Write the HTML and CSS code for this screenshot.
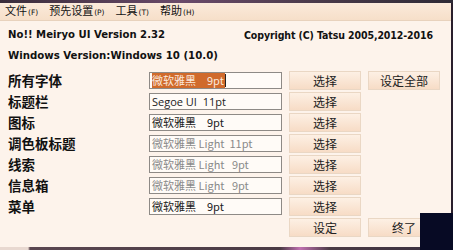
FILE: index.html
```html
<!DOCTYPE html>
<html>
<head>
<meta charset="utf-8">
<link rel="stylesheet" href="styles.css">
</head>
<body>
<div class="topstrip"></div>
<div class="window">
  <div class="menubar">
    <span class="menu">文件<small>(F)</small></span>
    <span class="menu">预先设置<small>(P)</small></span>
    <span class="menu">工具<small>(T)</small></span>
    <span class="menu">帮助<small>(H)</small></span>
  </div>
  <div class="content">
    <div class="head1">
      <span class="ver">No!! Meiryo UI Version 2.32</span>
      <span class="copy">Copyright (C) Tatsu 2005,2012-2016</span>
    </div>
    <div class="head2">Windows Version:Windows 10 (10.0)</div>
    <div class="rows">
      <div class="row">
        <span class="label">所有字体</span>
        <span class="box"><span class="sel">微软雅黑　9pt</span><span class="caret"></span></span>
        <span class="btn">选择</span>
        <span class="btn">设定全部</span>
      </div>
      <div class="row">
        <span class="label">标题栏</span>
        <span class="box seg">Segoe UI&nbsp; 11pt</span>
        <span class="btn">选择</span>
      </div>
      <div class="row">
        <span class="label">图标</span>
        <span class="box">微软雅黑　9pt</span>
        <span class="btn">选择</span>
      </div>
      <div class="row">
        <span class="label">调色板标题</span>
        <span class="box grey">微软雅黑 Light&nbsp; 11pt</span>
        <span class="btn">选择</span>
      </div>
      <div class="row">
        <span class="label">线索</span>
        <span class="box grey">微软雅黑 Light&nbsp;&nbsp; 9pt</span>
        <span class="btn">选择</span>
      </div>
      <div class="row">
        <span class="label">信息箱</span>
        <span class="box grey">微软雅黑 Light&nbsp;&nbsp; 9pt</span>
        <span class="btn">选择</span>
      </div>
      <div class="row">
        <span class="label">菜单</span>
        <span class="box">微软雅黑　9pt</span>
        <span class="btn">选择</span>
      </div>
      <div class="row">
        <span class="label"></span>
        <span class="spacer"></span>
        <span class="btn">设定</span>
        <span class="btn">终了</span>
      </div>
    </div>
  </div>
</div>
<div class="bottomstrip"></div>
<div class="overlay"></div>
</body>
</html>
```
FILE: styles.css
```css
html, body {
  margin: 0;
  padding: 0;
}
body {
  width: 453px;
  height: 250px;
  overflow: hidden;
  background: #2a1f2c;
  position: relative;
  font-family: "Noto Sans CJK SC", sans-serif;
}
.topstrip {
  height: 3px;
  background: linear-gradient(90deg, #3a2c3a, #6a4a6a 40%, #4a3a4a 70%, #2e2a36);
}
.window {
  width: 451px;
  height: 244px;
  background: #fdf3eb;
  display: flex;
  flex-direction: column;
}
.menubar {
  height: 17px;
  display: flex;
  align-items: center;
  padding-left: 5px;
  gap: 11px;
  background: linear-gradient(#fbeadb, #f6dfc9);
  border-bottom: 1px solid #e8d2bd;
  font-size: 11px;
  color: #111;
}
.menu {
  display: inline-flex;
  align-items: baseline;
  line-height: 17px;
}
.menu small {
  font-family: "DejaVu Sans", sans-serif;
  font-size: 7.5px;
  margin-left: 1px;
}
.content {
  padding-left: 8px;
  display: flex;
  flex-direction: column;
}
.head1 {
  display: flex;
  justify-content: space-between;
  align-items: center;
  height: 21px;
  margin-top: 3px;
  padding-right: 18px;
  font-family: "DejaVu Sans", sans-serif;
  font-weight: bold;
  font-size: 10.5px;
  color: #111;
}
.ver {
  font-size: 10.1px;
}
.copy {
  font-family: "DejaVu Sans Condensed", "DejaVu Sans", sans-serif;
  letter-spacing: -0.1px;
}
.head2 {
  height: 20px;
  line-height: 20px;
  margin-top: 1px;
  font-family: "DejaVu Sans", sans-serif;
  font-weight: bold;
  font-size: 10.2px;
  color: #111;
}
.rows {
  margin-top: 6px;
  display: flex;
  flex-direction: column;
  gap: 4px;
}
.row {
  display: flex;
  align-items: center;
  height: 17px;
}
.label {
  width: 141px;
  font-weight: bold;
  font-size: 13.5px;
  line-height: 17px;
  color: #111;
}
.box {
  height: 15px;
  border: 1px solid #8e8a86;
  background: #fffbf7;
  font-size: 11px;
  line-height: 15px;
  padding-left: 2px;
  color: #222;
  display: flex;
  align-items: center;
  box-sizing: content-box;
  width: 129px;
  white-space: pre;
}
.box.seg {
  font-family: "Open Sans", "Noto Sans", sans-serif;
  font-size: 11px;
}
.box.grey {
  color: #8a8a8a;
}
.sel {
  background: #d06a2c;
  color: #fbe8dc;
  height: 15px;
  padding-right: 1px;
}
.caret {
  width: 1px;
  height: 13px;
  background: #222;
}
.spacer {
  width: 133px;
}
.btn {
  width: 70px;
  height: 17px;
  margin-left: 7px;
  border: 1px solid #ead7c4;
  background: linear-gradient(#fdf0e4, #f7dcc6);
  font-size: 12px;
  line-height: 17px;
  text-align: center;
  color: #222;
  box-sizing: content-box;
}
.bottomstrip {
  height: 3px;
  background: linear-gradient(90deg, #e8d8d0 0, #e8d8d0 28px, #5a4650 30px, #4a3a44 280px, #c070b0 300px, #4a3a44 330px, #3a3040);
}
.overlay {
  position: absolute;
  left: 420px;
  top: 213px;
  width: 33px;
  height: 37px;
  background: #070a24;
}
```
